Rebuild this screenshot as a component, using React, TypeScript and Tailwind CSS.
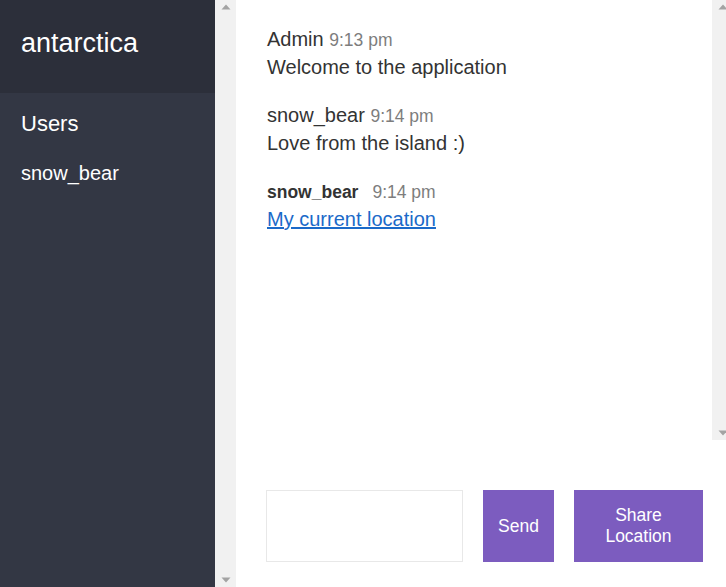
import React from "react";

const font = { fontFamily: '"Liberation Sans", Arial, sans-serif' };

const Arrow = ({ down }: { down?: boolean }) => (
  <svg width="10" height="6" viewBox="0 0 10 6" className="block">
    {down ? (
      <polygon points="0.5,0.5 9.5,0.5 5,5.5" fill="#a3a3a3" />
    ) : (
      <polygon points="0.5,5.5 9.5,5.5 5,0.5" fill="#a3a3a3" />
    )}
  </svg>
);

// fake classic scrollbar strip (track + arrows)
const ScrollStrip = ({ className }: { className?: string }) => (
  <div
    className={
      "w-[21px] shrink-0 bg-[#f1f1f1] flex flex-col items-center justify-between pt-[4px] pb-[4px] " +
      (className || "")
    }
  >
    <Arrow />
    <Arrow down />
  </div>
);

const App = () => {
  return (
    <div
      className="flex h-[587px] w-[726px] overflow-hidden bg-white text-[#333]"
      style={font}
    >
      {/* sidebar */}
      <div className="w-[215px] shrink-0 bg-[#333744] text-white flex flex-col">
        <div className="h-[93px] bg-[#2c2f3a] px-[21px] pt-[28px]">
          <h3 className="text-[27px] leading-[31px]">antarctica</h3>
        </div>
        <div className="px-[21px] pt-[18px]">
          <h3 className="text-[22px] leading-[26px]">Users</h3>
          <ol className="mt-[24px]">
            <li className="text-[20px] leading-[24px]">snow_bear</li>
          </ol>
        </div>
      </div>
      <ScrollStrip />

      {/* main column */}
      <div className="flex flex-col w-[497px] shrink-0">
        <div className="flex h-[440px]">
          <ol className="flex-1 pl-[31px] pt-[25px] text-[20px] leading-[28px]">
            <li className="mb-[20px]">
              <div className="h-[28px]">
                <span className="leading-none">Admin</span>{" "}
                <span className="text-[17.5px] leading-none text-[#7d7d7d]">9:13 pm</span>
              </div>
              <p className="h-[28px]">Welcome to the application</p>
            </li>
            <li className="mb-[20px]">
              <div className="h-[28px]">
                <span className="leading-none">snow_bear</span>{" "}
                <span className="text-[17.5px] leading-none text-[#7d7d7d]">9:14 pm</span>
              </div>
              <p className="h-[28px]">Love from the island :)</p>
            </li>
            <li className="mb-[20px]">
              <div className="h-[28px]">
                <span className="text-[17.5px] leading-none font-bold mr-[14px]">snow_bear</span>
                <span className="text-[17.5px] leading-none text-[#7d7d7d]">9:14 pm</span>
              </div>
              <p className="h-[28px]">
                <a href="#" className="text-[#1b6ac9] underline">
                  My current location
                </a>
              </p>
            </li>
          </ol>
          <ScrollStrip />
        </div>

        {/* footer form */}
        <div className="flex pl-[30px] pt-[50px] h-[147px]">
          <input
            className="w-[197px] h-[72px] border border-[#e8e8e8] outline-none px-2"
            style={font}
          />
          <button className="ml-[20px] w-[71px] h-[72px] bg-[#7c5cbf] text-white text-[17.5px]">
            Send
          </button>
          <button className="ml-[20px] w-[129px] h-[72px] bg-[#7c5cbf] text-white text-[17.5px] leading-[21px] px-[20px]">
            Share Location
          </button>
        </div>
      </div>
    </div>
  );
};

export default App;
